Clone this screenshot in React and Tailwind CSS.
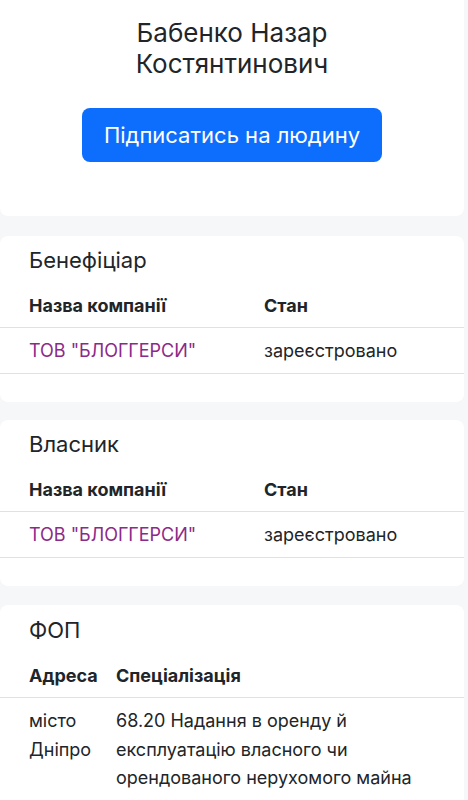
export default function App() {
  const font = { fontFamily: 'Inter, "Noto Sans", sans-serif' };
  return (
    <div className="min-h-[800px] bg-[#f6f7f8] text-[#212529] overflow-hidden" style={font}>
      <div className="w-[464px] h-[216px] bg-white rounded-b-[8px] pt-[17px] flex flex-col items-center">
        <h1 className="text-[26px] leading-[31px] text-center font-normal">Бабенко Назар<br />Костянтинович</h1>
        <button className="mt-[29px] w-[300px] h-[54px] rounded-[8px] bg-[#0d6efd] text-white text-[22px]">Підписатись на людину</button>
      </div>

      {[{ title: 'Бенефіціар', mt: 'mt-[20px]' }, { title: 'Власник', mt: 'mt-[18px]' }].map((s, i) => (
        <div key={i} className={`w-[464px] h-[166px] bg-white rounded-[8px] ${s.mt} pt-[9px]`}>
          <div className="px-[29px] text-[22px] leading-[30px]">{s.title}</div>
          <table className="w-full mt-[13px] text-[18px] leading-[27px] border-collapse">
            <thead>
              <tr className="border-b border-[#dee2e6]">
                <th className="w-[264px] text-left font-bold pl-[29px] pr-2 pb-[8px] pt-[4px]">Назва компанії</th>
                <th className="text-left font-bold pl-0 pr-2 pb-[8px] pt-[4px]">Стан</th>
              </tr>
            </thead>
            <tbody>
              <tr className="border-b border-[#dee2e6]">
                <td className="pl-[29px] pr-2 pt-[9px] pb-[9px] text-[#8c2a89]">ТОВ "БЛОГГЕРСИ"</td>
                <td className="pr-2 pt-[9px] pb-[9px]">зареєстровано</td>
              </tr>
            </tbody>
          </table>
        </div>
      ))}

      <div className="w-[464px] bg-white rounded-[8px] mt-[19px] pt-[10px] pb-[20px]">
        <div className="px-[29px] text-[22px] leading-[30px]">ФОП</div>
        <table className="w-full mt-[13px] text-[18px] leading-[27px] border-collapse">
          <thead>
            <tr className="border-b border-[#dee2e6]">
              <th className="w-[116px] text-left font-bold pl-[29px] pr-2 pb-[8px] pt-[4px]">Адреса</th>
              <th className="text-left font-bold pr-2 pb-[8px] pt-[4px]">Спеціалізація</th>
            </tr>
          </thead>
          <tbody>
            <tr>
              <td className="pl-[29px] pr-2 pt-[9px] pb-[8px] align-top leading-[28.5px]">місто<br />Дніпро</td>
              <td className="pr-2 pt-[9px] pb-[8px] align-top leading-[28.5px]">68.20 Надання в оренду й<br />експлуатацію власного чи<br />орендованого нерухомого майна</td>
            </tr>
          </tbody>
        </table>
      </div>
    </div>
  );
}
